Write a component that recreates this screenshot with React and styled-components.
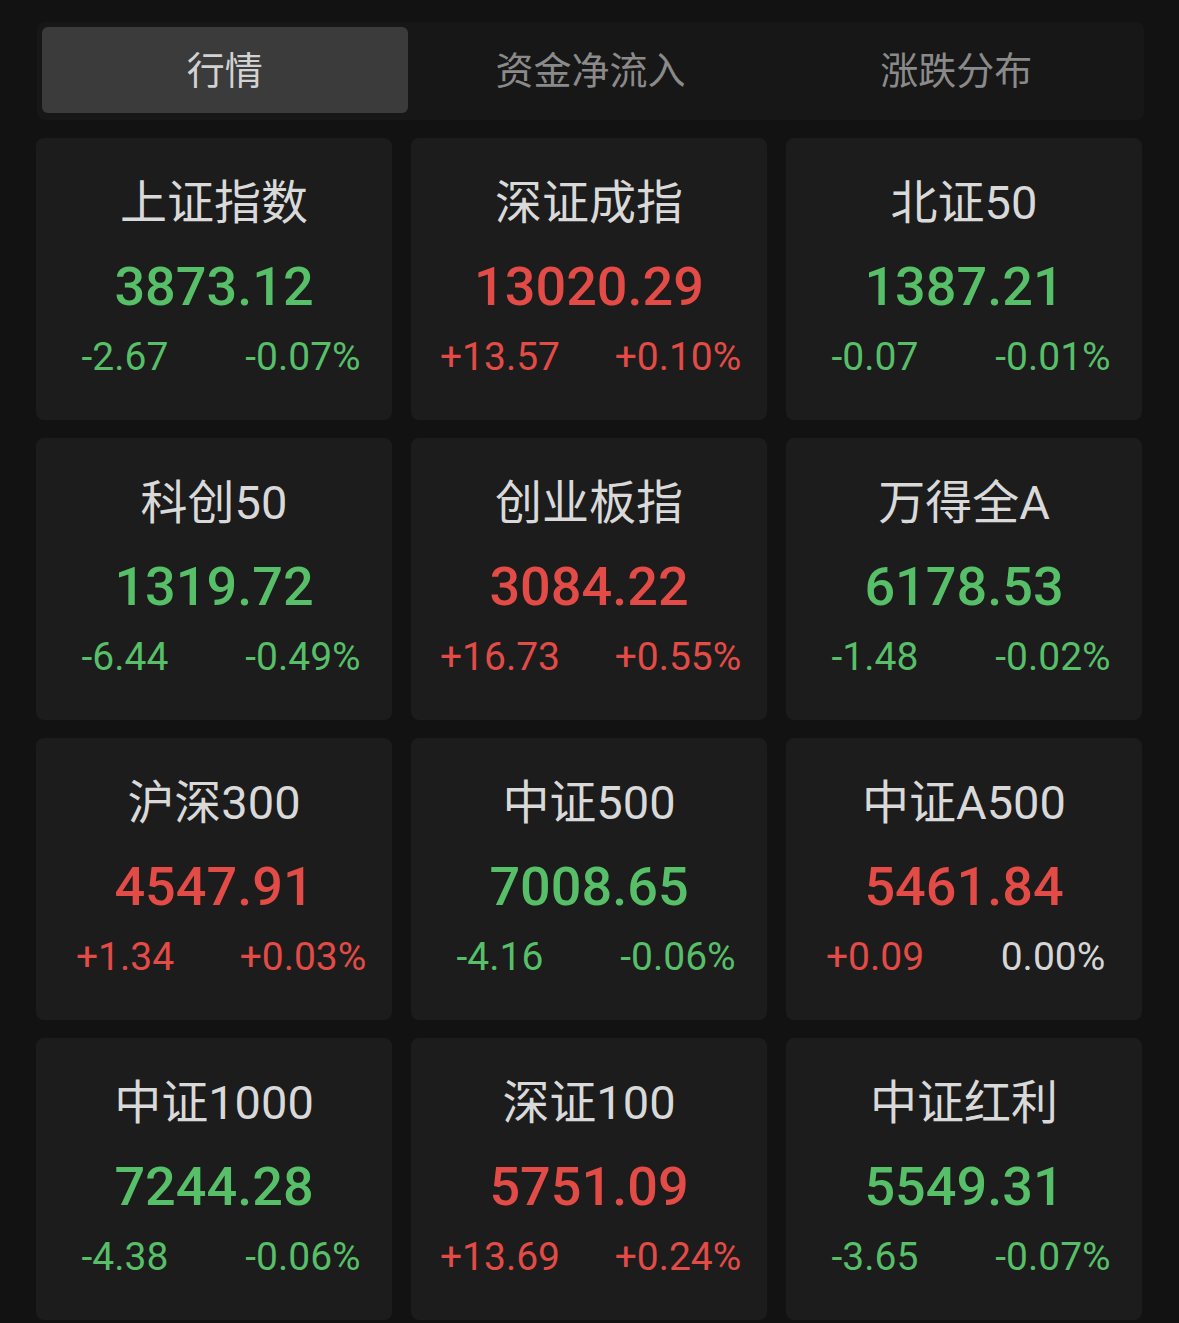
import styled, { createGlobalStyle } from "styled-components"

const GlobalStyle = createGlobalStyle`
  html, body {
    margin: 0;
    padding: 0;
    background: #121212;
  }
  body {
    font-family: "Roboto", "Noto Sans CJK SC", sans-serif;
  }
`

const tabs = ["行情", "资金净流入", "涨跌分布"]

const indices = [
  { name: "上证指数", price: "3873.12", change: "-2.67", pct: "-0.07%" },
  { name: "深证成指", price: "13020.29", change: "+13.57", pct: "+0.10%" },
  { name: "北证50", price: "1387.21", change: "-0.07", pct: "-0.01%" },
  { name: "科创50", price: "1319.72", change: "-6.44", pct: "-0.49%" },
  { name: "创业板指", price: "3084.22", change: "+16.73", pct: "+0.55%" },
  { name: "万得全A", price: "6178.53", change: "-1.48", pct: "-0.02%" },
  { name: "沪深300", price: "4547.91", change: "+1.34", pct: "+0.03%" },
  { name: "中证500", price: "7008.65", change: "-4.16", pct: "-0.06%" },
  { name: "中证A500", price: "5461.84", change: "+0.09", pct: "0.00%" },
  { name: "中证1000", price: "7244.28", change: "-4.38", pct: "-0.06%" },
  { name: "深证100", price: "5751.09", change: "+13.69", pct: "+0.24%" },
  { name: "中证红利", price: "5549.31", change: "-3.65", pct: "-0.07%" },
]

const toneOf = (v) => {
  if (v.startsWith("+")) return "up"
  if (v.startsWith("-")) return "down"
  return "flat"
}

const colors = {
  up: "#e24b46",
  down: "#57bf68",
  flat: "#d6d6d6",
}

const App = () => {
  return (
    <Page>
      <GlobalStyle />
      <TabBar>
        {tabs.map((t, i) => (
          <Tab key={t} $active={i === 0}>
            {t}
          </Tab>
        ))}
      </TabBar>
      <Grid>
        {indices.map((item) => (
          <Card key={item.name}>
            <Name>{item.name}</Name>
            <Price $tone={toneOf(item.change)}>{item.price}</Price>
            <Changes>
              <Change $tone={toneOf(item.change)}>{item.change}</Change>
              <Change $tone={toneOf(item.pct)}>{item.pct}</Change>
            </Changes>
          </Card>
        ))}
      </Grid>
    </Page>
  )
}

export default App

const Page = styled.div`
  padding: 22px 35px 0 36px;
  display: flex;
  flex-direction: column;
  gap: 18px;
`

const TabBar = styled.div`
  display: grid;
  grid-template-columns: repeat(3, 1fr);
  background: #171717;
  border-radius: 8px;
  padding: 5px 5px 7px;
  margin-left: 1px;
  height: 86px;
`

const Tab = styled.div`
  display: flex;
  align-items: center;
  justify-content: center;
  padding-bottom: 6px;
  box-sizing: border-box;
  border-radius: 6px;
  font-size: 38px;
  font-family: "Noto Sans CJK SC", sans-serif;
  color: ${(p) => (p.$active ? "#d2d2d2" : "#8a8a8a")};
  background: ${(p) => (p.$active ? "#3b3b3b" : "transparent")};
`

const Grid = styled.div`
  display: grid;
  grid-template-columns: repeat(3, 356px);
  grid-auto-rows: 282px;
  column-gap: 19px;
  row-gap: 18px;
`

const Card = styled.div`
  background: #1c1c1c;
  border-radius: 8px;
  display: flex;
  flex-direction: column;
  align-items: center;
  padding-top: 35px;
  box-sizing: border-box;
`

const Name = styled.div`
  font-size: 47px;
  line-height: 60px;
  color: #d9d9d9;
`

const Price = styled.div`
  margin-top: 22px;
  font-size: 54px;
  line-height: 64px;
  font-weight: 500;
  color: ${(p) => colors[p.$tone]};
`

const Changes = styled.div`
  margin-top: 13px;
  width: 100%;
  display: grid;
  grid-template-columns: 1fr 1fr;
`

const Change = styled.div`
  text-align: center;
  font-size: 39px;
  line-height: 50px;
  color: ${(p) => colors[p.$tone]};
`
